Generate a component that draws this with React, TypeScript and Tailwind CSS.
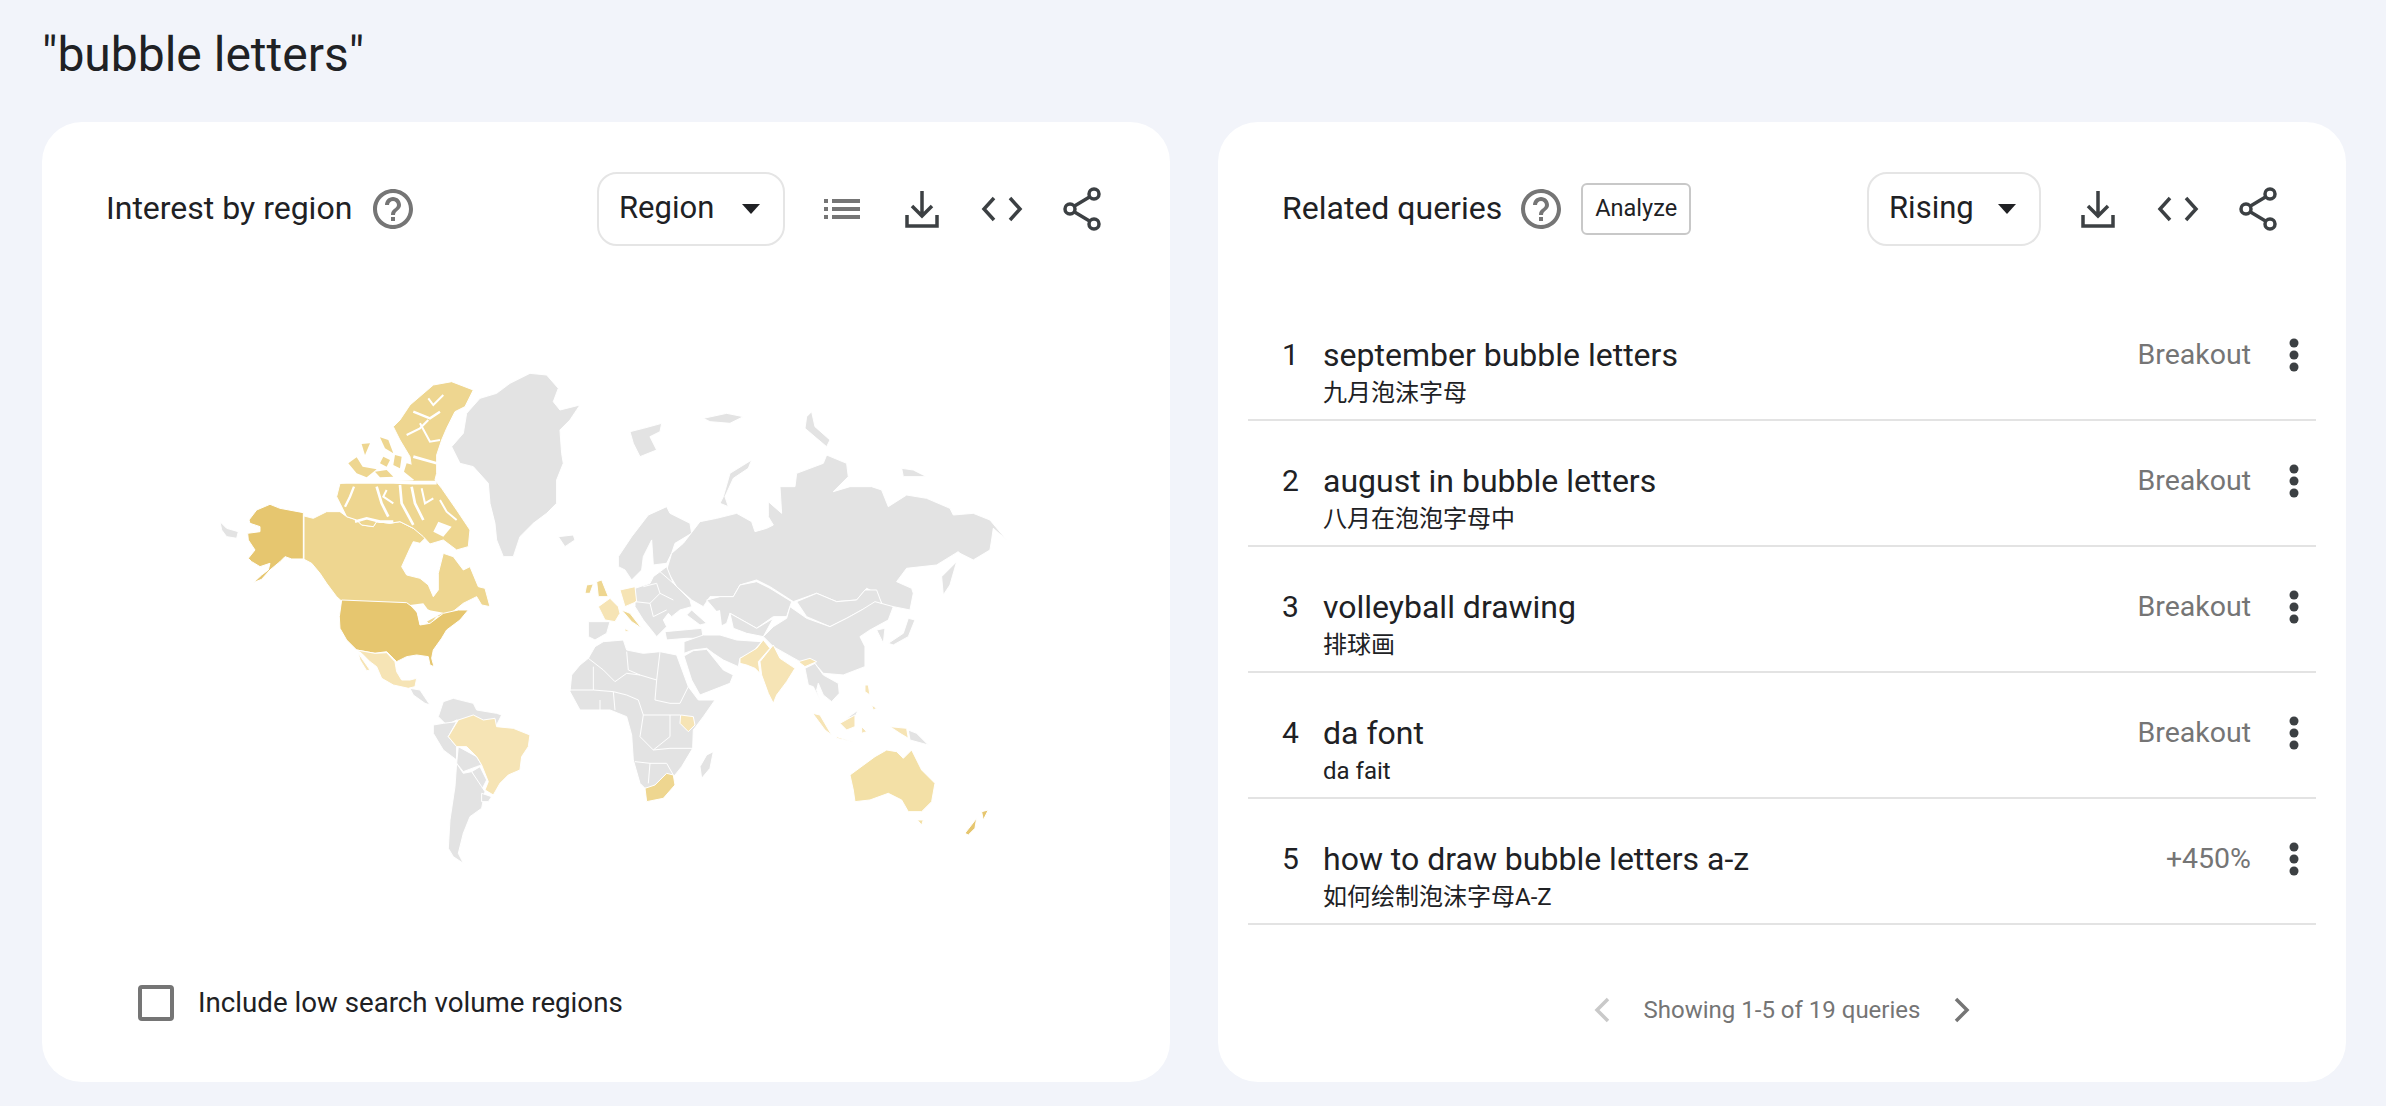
const GOLD = '#e6c66f';
const SAND = '#eed690';
const PALE = '#f6e4b5';
const GREY = '#e3e3e3';

type Shape = { fill: string; pts: string };
type Cut = { w: number; pts: string };

// coords below are in 3x space, each group has its own origin
const NORTH: Shape[] = [
  { fill: GOLD, pts: '207,540 230,510 270,493 300,505 370,518 370,657 335,657 315,650 300,665 270,690 245,718 220,728 245,705 265,690 270,670 240,680 215,665 205,655 225,630 205,600 203,580 240,575 240,560 210,550' },
  { fill: SAND, pts: '372,528 400,535 440,515 480,515 500,530 530,540 545,555 580,560 590,545 630,550 660,545 690,560 720,575 740,590 720,610 700,605 690,625 665,680 680,705 720,715 745,735 760,770 775,750 775,700 790,640 820,650 850,690 870,680 895,740 915,745 930,800 905,795 890,770 850,790 800,830 770,830 750,855 740,845 760,820 745,810 720,820 700,800 665,790 490,788 470,770 440,730 420,700 395,670 372,658' },
  // arctic islands as one mass, channels are cut out below
  { fill: SAND, pts: '640,260 660,240 680,210 690,195 760,135 815,125 880,150 855,200 825,215 800,265 785,300 770,345 770,400 765,420 785,445 830,510 870,570 865,620 830,630 790,600 750,612 730,590 700,565 660,545 630,550 590,545 580,560 545,555 530,540 500,530 480,490 470,470 480,430 520,425 700,420 690,350 660,300' },
  { fill: GREY, pts: '815,320 850,280 860,220 900,175 950,160 990,130 1050,100 1100,105 1135,145 1120,185 1140,210 1200,195 1170,240 1140,270 1145,340 1150,370 1130,420 1130,490 1100,520 1060,550 1020,590 1000,650 970,650 950,600 945,550 930,490 925,430 880,380 840,370' },
  { fill: GREY, pts: '1135,590 1180,585 1185,600 1155,620' },
  { fill: GREY, pts: '120,545 140,565 175,575 170,595 140,590 125,570' },
];

const ARCTIC_CUTS: Cut[] = [
  { w: 11, pts: '480,426 560,426 640,426 700,428 770,428' },
  { w: 7, pts: '522,440 510,470 495,500' },
  { w: 8, pts: '525,545 560,535 600,545 640,545' },
  { w: 8, pts: '590,440 605,490 625,530' },
  { w: 8, pts: '660,435 665,490 700,555' },
  { w: 8, pts: '695,440 705,490 730,540' },
  { w: 6, pts: '620,450 610,470 640,490' },
  { w: 6, pts: '725,445 735,490 760,475' },
  { w: 7, pts: '700,215 750,235 780,215' },
  { w: 6, pts: '720,250 750,305 780,300' },
  { w: 6, pts: '680,285 720,265 745,240' },
  { w: 6, pts: '790,165 760,195 745,175' },
  { w: 8, pts: '700,350 770,370' },
  { w: 6, pts: '780,480 800,515 830,540' },
];

const ARCTIC_ISLES = [
  '505,370 530,352 548,380 590,388 560,412 530,400',
  '545,312 570,310 555,345',
  '600,292 625,300 640,340 615,325',
  '645,345 665,350 660,385 640,375',
  '610,350 630,360 620,380 600,370',
  '680,370 760,392 762,415 700,418 672,395',
  '585,395 620,390 640,410 600,412',
];

const AMERICAS: Shape[] = [
  { fill: GOLD, pts: '485,0 680,8 710,30 720,75 750,70 790,40 835,30 865,30 840,60 800,90 785,115 760,150 755,175 762,200 750,195 745,170 710,165 680,170 650,185 640,175 620,155 585,160 530,150 500,120 480,85 478,50' },
  { fill: PALE, pts: '530,150 585,160 620,158 645,185 650,215 665,240 690,240 710,235 705,260 685,265 640,255 605,235 590,200 570,185 545,160' },
  { fill: PALE, pts: '535,160 570,210 560,212 540,180' },
  { fill: GREY, pts: '690,265 720,270 750,315 735,310 700,285' },
  { fill: GREY, pts: '790,305 820,295 880,310 890,330 950,340 965,345 950,375 830,360 800,375 775,350' },
  { fill: GREY, pts: '760,375 790,370 830,365 805,410 830,440 830,480 790,450 760,400' },
  { fill: GREY, pts: '835,440 890,470 905,495 890,500 850,515 830,490' },
  { fill: GREY, pts: '875,515 900,500 920,540 905,570' },
  { fill: GREY, pts: '830,490 850,520 875,515 905,560 915,575 905,625 870,650 850,700 835,760 850,790 820,770 805,745 810,660 825,560' },
  { fill: GREY, pts: '905,580 935,590 925,605 905,605' },
  { fill: PALE, pts: '835,360 880,345 910,360 945,355 950,380 1000,385 1050,405 1045,440 1025,470 1020,510 985,525 960,550 940,585 915,570 925,545 905,495 890,470 860,440 830,440 805,410' },
];

const EURASIA: Shape[] = [
  { fill: GREY, pts: '210,155 250,145 305,130 300,155 270,170 290,210 240,230 220,190' },
  { fill: GREY, pts: '490,350 510,280 575,240 565,265 520,295 495,350 505,380 480,370' },
  { fill: GREY, pts: '740,110 755,95 765,140 810,180 800,200 770,175 735,145' },
  { fill: GREY, pts: '430,115 500,100 550,110 510,130 450,125' },
  { fill: GREY, pts: '1025,265 1060,270 1100,290 1030,290' },
  { fill: GREY, pts: '175,530 215,470 265,405 320,380 330,400 390,430 395,460 345,490 335,520 320,550 280,555 275,480 250,530 245,570 215,600 195,570 175,560' },
  { fill: GREY, pts: '335,520 370,490 420,425 470,415 530,400 575,425 585,455 620,445 640,435 625,410 625,365 665,400 660,320 705,320 710,280 790,250 800,225 860,250 865,290 820,335 870,320 935,320 965,330 985,380 1040,345 1100,355 1170,385 1180,405 1240,400 1290,420 1340,480 1300,445 1295,480 1290,510 1240,540 1200,520 1195,515 1130,555 1040,565 1010,605 1055,625 1060,640 1050,690 1000,680 975,690 950,640 920,625 890,660 830,665 770,640 700,665 630,620 590,600 540,615 520,650 450,650 430,680 395,660 350,620 320,570' },
  { fill: GREY, pts: '1145,590 1190,545 1170,615 1150,645' },
  { fill: GREY, pts: '440,660 480,650 520,650 540,615 590,605 630,625 695,665 680,710 640,710 590,745 510,700 500,730 480,740 470,695' },
  { fill: GREY, pts: '710,665 770,640 830,665 890,660 915,630 950,630 965,670 905,690 860,715 810,740 740,710' },
  { fill: GREY, pts: '690,680 740,715 810,740 860,715 905,690 945,665 1000,680 985,720 930,750 900,770 915,800 915,860 850,885 790,880 760,845 720,845 640,800 610,770 640,740 680,715' },
  { fill: GREY, pts: '510,700 590,745 640,715 610,770 560,760 520,745' },
  { fill: GREY, pts: '950,750 975,745 970,790' },
  { fill: GREY, pts: '315,755 425,745 430,775 380,775 320,780' },
  { fill: GREY, pts: '395,690 440,730 420,735 380,705' },
  { fill: GREY, pts: '1045,715 1065,720 1045,770 1000,795 985,790 1030,760' },
  { fill: GREY, pts: '225,625 270,610 280,590 300,575 320,560 340,610 390,660 395,680 360,690 335,710 325,700 310,720 320,740 290,770 270,745 250,720 225,680' },
  { fill: GREY, pts: '85,725 150,725 140,760 105,780 85,770' },
  { fill: PALE, pts: '115,680 150,655 175,680 180,700 165,725 135,720' },
  { fill: PALE, pts: '180,630 225,620 230,665 195,680' },
  { fill: SAND, pts: '110,605 125,600 145,650 115,650' },
  { fill: SAND, pts: '80,615 100,612 90,640 75,640' },
  { fill: SAND, pts: '185,690 210,700 245,745 215,725' },
  { fill: PALE, pts: '195,745 210,755 195,755' },
];

const EURASIA_LINES = [
  '225,665 270,670 300,640 340,660',
  '270,670 280,710 320,690',
  '250,620 290,610 300,640',
  '300,575 340,610',
];

const SOUTH: Shape[] = [
  { fill: GREY, pts: '372,65 430,45 480,45 530,60 605,65 575,100 540,115 535,140 490,120 460,100 440,85 400,90 372,100' },
  { fill: GREY, pts: '372,108 400,92 440,88 490,150 520,165 510,190 420,225 395,180' },
  { fill: PALE, pts: '540,115 590,85 610,60 630,85 595,125 600,160 585,145 560,135 540,130' },
  { fill: PALE, pts: '600,125 640,75 660,115 705,145 680,185 650,225 640,250 625,220 605,165' },
  { fill: PALE, pts: '715,125 750,115 770,125 735,140' },
  { fill: GREY, pts: '735,145 765,130 790,165 835,190 838,220 815,245 790,225 775,190 770,210 780,240 760,200 745,195' },
  { fill: GREY, pts: '30,215 35,165 60,135 85,115 105,80 130,65 190,60 200,90 250,100 300,95 350,105 385,200 415,240 465,240 430,290 400,330 398,385 365,440 345,465 325,490 255,505 240,490 220,420 215,345 200,290 150,270 60,270' },
  { fill: PALE, pts: '362,285 400,290 405,315 385,335 360,310' },
  { fill: SAND, pts: '255,505 285,495 320,460 340,465 345,495 310,535 260,545' },
  { fill: GREY, pts: '440,405 460,395 450,445 425,475 420,440' },
  { fill: '#f3e0a6', pts: '870,465 945,410 980,390 1010,395 1030,415 1055,390 1085,450 1125,490 1115,545 1085,575 1045,575 1025,540 985,520 930,540 885,545 880,510' },
  { fill: '#f3e0a6', pts: '1072,600 1090,600 1085,615' },
  { fill: GOLD, pts: '1215,640 1250,595 1245,625 1225,645' },
  { fill: GOLD, pts: '1265,575 1285,570 1270,600' },
  { fill: PALE, pts: '758,280 780,285 815,345 795,330' },
  { fill: PALE, pts: '830,350 880,365 830,355' },
  { fill: GREY, pts: '860,295 895,270 885,290' },
  { fill: PALE, pts: '840,310 885,285 885,320 860,330' },
  { fill: PALE, pts: '915,195 925,195 930,225 915,215' },
  { fill: PALE, pts: '935,255 950,265 940,270' },
  { fill: PALE, pts: '905,320 920,335 905,340' },
  { fill: PALE, pts: '990,320 1040,325 1045,355 1020,340' },
  { fill: GREY, pts: '1045,330 1070,340 1105,375 1050,360' },
];

// inner borders of Africa
const AFRICA_LINES = [
  '85,115 130,150 165,185 200,160 240,165 290,180 300,95',
  '200,95 205,150 240,165',
  '100,140 100,210 160,215 200,225 235,240',
  '30,210 100,210',
  '290,180 285,240 330,250 360,250 385,200',
  '235,240 250,285 330,285 360,285',
  '250,285 240,350 280,390 330,385 398,385',
  '330,285 330,350 280,390',
  '225,425 270,430 265,490',
  '270,430 320,430 340,465',
  '120,240 120,275',
  '160,215 165,270',
];

const QUERIES = [
  { rank: 1, title: 'september bubble letters', sub: '九月泡沫字母', value: 'Breakout' },
  { rank: 2, title: 'august in bubble letters', sub: '八月在泡泡字母中', value: 'Breakout' },
  { rank: 3, title: 'volleyball drawing', sub: '排球画', value: 'Breakout' },
  { rank: 4, title: 'da font', sub: 'da fait', value: 'Breakout' },
  { rank: 5, title: 'how to draw bubble letters a-z', sub: '如何绘制泡沫字母A-Z', value: '+450%' },
];

function Lands({ shapes, x, y }: { shapes: Shape[]; x: number; y: number }) {
  return (
    <g transform={`translate(${x} ${y}) scale(0.3333)`}>
      {shapes.map((s, i) => (
        <polygon key={i} points={s.pts} fill={s.fill} stroke="#ffffff" strokeWidth={3} strokeLinejoin="round" />
      ))}
    </g>
  );
}

function Lines({ pts, x, y, w = 3 }: { pts: string[]; x: number; y: number; w?: number }) {
  return (
    <g transform={`translate(${x} ${y}) scale(0.3333)`}>
      {pts.map((p, i) => (
        <polyline key={i} points={p} fill="none" stroke="#ffffff" strokeWidth={w} />
      ))}
    </g>
  );
}

function WorldMap() {
  return (
    <svg className="block mt-[34px]" width={1128} height={680} viewBox="42 280 1128 680">
      <Lands shapes={NORTH} x={180} y={340} />
      <g transform="translate(180 340) scale(0.3333)">
        {ARCTIC_CUTS.map((c, i) => (
          <polyline key={i} points={c.pts} fill="none" stroke="#ffffff" strokeWidth={c.w} />
        ))}
        <polygon points="775,545 815,560 790,590 760,575" fill="#ffffff" />
        {ARCTIC_ISLES.map((p, i) => (
          <polygon key={i} points={p} fill={SAND} />
        ))}
      </g>
      <Lands shapes={AMERICAS} x={180} y={600} />
      <g transform="translate(180 600) scale(0.3333)" fill="#ffffff">
        <polygon points="690,15 730,10 745,30 790,38 740,65 720,75 712,40" />
      </g>
      <Lands shapes={EURASIA} x={560} y={380} />
      <Lines pts={EURASIA_LINES} x={560} y={380} />
      <g transform="translate(560 380) scale(0.3333)" fill="#ffffff">
        <polygon points="445,700 480,690 490,770 460,770" />
      </g>
      <Lands shapes={SOUTH} x={560} y={620} />
      <Lines pts={AFRICA_LINES} x={560} y={620} />
    </svg>
  );
}

function HelpIcon() {
  return (
    <svg width={48} height={48} viewBox="0 0 24 24" fill="#757575">
      <path d="M11 18h2v-2h-2v2zm1-16C6.48 2 2 6.48 2 12s4.48 10 10 10 10-4.48 10-10S17.52 2 12 2zm0 18c-4.41 0-8-3.59-8-8s3.59-8 8-8 8 3.59 8 8-3.59 8-8 8zm0-14c-2.21 0-4 1.79-4 4h2c0-1.1.9-2 2-2s2 .9 2 2c0 2-3 1.75-3 5h2c0-2.25 3-2.5 3-5 0-2.21-1.79-4-4-4z" />
    </svg>
  );
}

function IconBox({ children }: { children: React.ReactNode }) {
  return <div className="flex h-[74px] w-[80px] items-center justify-center">{children}</div>;
}

function ListIcon() {
  return (
    <svg width={40} height={24} viewBox="0 0 40 24" fill="#757575">
      <rect x="2" y="2" width="4" height="4" />
      <rect x="10" y="2" width="28" height="4" />
      <rect x="2" y="10" width="4" height="4" />
      <rect x="10" y="10" width="28" height="4" />
      <rect x="2" y="18" width="4" height="4" />
      <rect x="10" y="18" width="28" height="4" />
    </svg>
  );
}

function DownloadIcon() {
  return (
    <svg width={36} height={40} viewBox="0 0 36 40" fill="none" stroke="#3c4043" strokeWidth={3.5}>
      <path d="M18 2v24M8 17l10 10 10-10" />
      <path d="M3 26v11h30V26" />
    </svg>
  );
}

function CodeIcon() {
  return (
    <svg width={42} height={28} viewBox="0 0 42 28" fill="none" stroke="#3c4043" strokeWidth={3.5}>
      <path d="M13 3L3 14l10 11M29 3l10 11-10 11" />
    </svg>
  );
}

function ShareIcon() {
  return (
    <svg width={40} height={44} viewBox="0 0 40 44" fill="none" stroke="#3c4043" strokeWidth={3.5}>
      <circle cx="32" cy="7" r="5" />
      <circle cx="8" cy="22" r="5" />
      <circle cx="32" cy="37" r="5" />
      <path d="M12.5 19L27.5 10M12.5 25l15 9" />
    </svg>
  );
}

function Select({ label, width }: { label: string; width: string }) {
  return (
    <div className={`flex h-[74px] items-center justify-between rounded-[20px] border-2 border-[#e5e5e5] pl-[20px] pr-[22px] text-[31px] text-[#202124] ${width}`}>
      <span className="mb-[2px]">{label}</span>
      <svg width={20} height={12} viewBox="0 0 20 12" fill="#202124">
        <path d="M1 1h18L10 11z" />
      </svg>
    </div>
  );
}

function MoreIcon() {
  return (
    <svg width={12} height={34} viewBox="0 0 12 34" fill="#3c4043">
      <circle cx="6" cy="5" r="4.5" />
      <circle cx="6" cy="17" r="4.5" />
      <circle cx="6" cy="29" r="4.5" />
    </svg>
  );
}

export default function App() {
  return (
    <div
      className="h-[1106px] w-[2386px] overflow-hidden bg-[#f2f4fa] pl-[42px] text-[#202124]"
      style={{ fontFamily: 'Roboto, "Noto Sans CJK SC", sans-serif' }}
    >
      <h1 className="h-[122px] pt-[25px] text-[48px] font-normal leading-[60px]">"bubble letters"</h1>
      <div className="flex gap-[48px]">
        <section className="h-[960px] w-[1128px] rounded-[40px] bg-white">
          <div className="mt-[50px] flex h-[74px] items-center pl-[64px] pr-[48px]">
            <span className="mb-[2px] text-[32px]">Interest by region</span>
            <span className="ml-[17px] flex"><HelpIcon /></span>
            <div className="ml-auto flex items-center gap-[17px]">
              <Select label="Region" width="w-[188px]" />
              <div className="flex">
                <IconBox><ListIcon /></IconBox>
                <IconBox><DownloadIcon /></IconBox>
                <IconBox><CodeIcon /></IconBox>
                <IconBox><ShareIcon /></IconBox>
              </div>
            </div>
          </div>
          <WorldMap />
          <label className="mt-[22px] flex items-center gap-[24px] pl-[96px]">
            <span className="h-[36px] w-[36px] rounded-[4px] border-[4px] border-[#757575]" />
            <span className="text-[27.7px]">Include low search volume regions</span>
          </label>
        </section>

        <section className="h-[960px] w-[1128px] rounded-[40px] bg-white">
          <div className="mt-[50px] flex h-[74px] items-center pl-[64px] pr-[48px]">
            <span className="mb-[2px] text-[32px]">Related queries</span>
            <span className="ml-[15px] flex"><HelpIcon /></span>
            <button className="ml-[16px] flex h-[52px] w-[110px] items-center justify-center rounded-[6px] border-2 border-[#c8c8c8] text-[23.5px]">
              Analyze
            </button>
            <div className="ml-auto flex items-center gap-[17px]">
              <Select label="Rising" width="w-[174px]" />
              <div className="flex">
                <IconBox><DownloadIcon /></IconBox>
                <IconBox><CodeIcon /></IconBox>
                <IconBox><ShareIcon /></IconBox>
              </div>
            </div>
          </div>
          <ul className="mx-[30px] mt-[49px]">
            {QUERIES.map((q) => (
              <li key={q.rank} className="flex h-[126px] border-b-2 border-[#e3e3e3] pl-[34px] pt-[40px]">
                <span className="w-[41px] text-[30px] leading-[40px]">{q.rank}</span>
                <div className="flex-1">
                  <div className="text-[32px] leading-[40px]">{q.title}</div>
                  <div className="text-[24px] leading-[36px]">{q.sub}</div>
                </div>
                <span className="text-[28.5px] leading-[40px] text-[#757575]">{q.value}</span>
                <span className="flex h-[40px] w-[65px] items-center justify-end pr-[16px]"><MoreIcon /></span>
              </li>
            ))}
          </ul>
          <div className="mt-[65px] flex h-[40px] items-center justify-center gap-[34px] text-[24px] text-[#757575]">
            <svg width={16} height={26} viewBox="0 0 16 26" fill="none" stroke="#c9c9c9" strokeWidth={3.5}>
              <path d="M14 2L3 13l11 11" />
            </svg>
            <span>Showing 1-5 of 19 queries</span>
            <svg width={16} height={26} viewBox="0 0 16 26" fill="none" stroke="#757575" strokeWidth={3.5}>
              <path d="M2 2l11 11L2 24" />
            </svg>
          </div>
        </section>
      </div>
    </div>
  );
}
